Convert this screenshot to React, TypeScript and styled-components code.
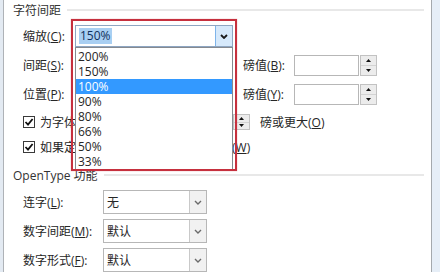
import React from "react";
import styled, { createGlobalStyle } from "styled-components";

const Global = createGlobalStyle`
  html, body { margin: 0; padding: 0; background: #fff; }
  body {
    font-family: "Open Sans", "Noto Sans CJK SC", sans-serif;
    font-size: 12px;
    color: #262626;
  }
  * { box-sizing: border-box; }
  u { text-decoration-thickness: 1px; text-underline-offset: 1px; }
`;

const Window = styled.div`
  display: flex;
  width: 440px;
  height: 272px;
  overflow: hidden;
  background: #fff;
`;

const EdgeLeft = styled.div`
  width: 4px;
  flex: none;
  background: #e3eaf2;
  border-right: 1px solid #aeb2b7;
`;

const EdgeRight = styled.div`
  width: 9px;
  flex: none;
  background: #e6eef7;
  border-left: 1px solid #a5a9ad;
`;

const Panel = styled.div`
  flex: 1;
  display: flex;
  flex-direction: column;
  padding: 3px 7px 0 9px;
`;

const GroupHeader = styled.div<{ $mt?: number }>`
  display: flex;
  align-items: center;
  gap: 6px;
  height: 14px;
  margin-top: ${(p) => p.$mt ?? 0}px;
  white-space: nowrap;
  color: #333;
  &::after {
    content: "";
    flex: 1;
    height: 2px;
    background: #e8e8e8;
  }
`;

const FieldRow = styled.div<{ $mt: number; $h: number }>`
  display: flex;
  align-items: center;
  height: ${(p) => p.$h}px;
  margin-top: ${(p) => p.$mt}px;
  padding-left: 10px;
`;

const Label = styled.span<{ $w: number; $ml?: number }>`
  width: ${(p) => p.$w}px;
  margin-left: ${(p) => p.$ml ?? 0}px;
  flex: none;
  white-space: nowrap;
`;

const ComboWrap = styled.div<{ $w: number; $h: number }>`
  position: relative;
  flex: none;
  width: ${(p) => p.$w}px;
  height: ${(p) => p.$h}px;
`;

const ComboBox = styled.div<{ $w: number; $h: number; $active?: boolean }>`
  flex: none;
  display: flex;
  width: ${(p) => p.$w}px;
  height: ${(p) => p.$h}px;
  border: 1px solid ${(p) => (p.$active ? "#8ea6c2" : "#b7b7b7")};
  background: #fff;
`;

const ComboText = styled.span`
  flex: 1;
  display: flex;
  align-items: center;
  padding-left: 3px;
  overflow: hidden;
  white-space: nowrap;
`;

const Selected = styled.span`
  background: #a9cff2;
  color: #10305c;
  padding: 1px 1px 2px;
  line-height: 1.1;
`;

const ComboButton = styled.span<{ $active?: boolean }>`
  width: 17px;
  flex: none;
  display: flex;
  align-items: center;
  justify-content: center;
  border-left: 1px solid ${(p) => (p.$active ? "#7eb4ea" : "#c9c9c9")};
  background: ${(p) => (p.$active ? "#d6e9fb" : "#f1f1f1")};
`;

const DropList = styled.div`
  position: absolute;
  z-index: 2;
  top: 22px;
  left: 0;
  width: 158px;
  padding-top: 1px;
  border: 1px solid #85898f;
  background: #fff;
`;

const DropItem = styled.div<{ $hi?: boolean }>`
  height: 15px;
  line-height: 15px;
  padding-left: 2px;
  background: ${(p) => (p.$hi ? "#3399ff" : "transparent")};
  color: ${(p) => (p.$hi ? "#fff" : "#262626")};
`;

const Highlight = styled.div`
  position: absolute;
  z-index: 3;
  top: -6px;
  left: -4px;
  width: 166px;
  height: 152px;
  border: 2px solid #c6303e;
  box-shadow: 0 0 1px rgba(198, 48, 62, 0.5);
  pointer-events: none;
`;

const Spinner = styled.div<{ $w: number; $h: number }>`
  flex: none;
  display: flex;
  gap: 1px;
  width: ${(p) => p.$w}px;
  height: ${(p) => p.$h}px;
`;

const SpinInput = styled.div`
  flex: 1;
  border: 1px solid #b7b7b7;
  background: #fff;
`;

const SpinButtons = styled.div`
  width: 17px;
  flex: none;
  display: flex;
  flex-direction: column;
  border: 1px solid #c2c2c2;
  background: #ececec;
`;

const SpinHalf = styled.span`
  flex: 1;
  display: flex;
  align-items: center;
  justify-content: center;
  & + & {
    border-top: 1px solid #d3d3d3;
  }
`;

const CheckRow = styled.div<{ $mt: number }>`
  display: flex;
  align-items: center;
  height: 20px;
  margin-top: ${(p) => p.$mt}px;
  padding-left: 10px;
  white-space: nowrap;
`;

const CheckLabel = styled.label<{ $w?: number }>`
  display: flex;
  align-items: center;
  flex: none;
  width: ${(p) => (p.$w ? `${p.$w}px` : "auto")};
`;

const Box = styled.span`
  width: 12px;
  height: 12px;
  flex: none;
  display: inline-flex;
  align-items: center;
  justify-content: center;
  margin-right: 5px;
  border: 1px solid #3a3a3a;
  background: #fff;
`;

const AfterText = styled.span`
  margin-left: 10px;
`;

const Chevron = ({ dark }: { dark?: boolean }) => (
  <svg width="8" height="5" viewBox="0 0 8 5">
    <path
      d="M1 1 L4 4 L7 1"
      fill="none"
      stroke={dark ? "#1a1a1a" : "#6a6a6a"}
      strokeWidth={dark ? 1.8 : 1.4}
    />
  </svg>
);

const Tri = ({ up }: { up?: boolean }) => (
  <svg width="5" height="3" viewBox="0 0 5 3">
    <path d={up ? "M0 3 L2.5 0 L5 3 Z" : "M0 0 L2.5 3 L5 0 Z"} fill="#111" />
  </svg>
);

const Check = () => (
  <svg width="10" height="10" viewBox="0 0 10 10">
    <path d="M1.5 5 L4 7.6 L8.6 2" fill="none" stroke="#111" strokeWidth="1.8" />
  </svg>
);

const SpinBox = ({ w, h }: { w: number; h: number }) => (
  <Spinner $w={w} $h={h}>
    <SpinInput />
    <SpinButtons>
      <SpinHalf>
        <Tri up />
      </SpinHalf>
      <SpinHalf>
        <Tri />
      </SpinHalf>
    </SpinButtons>
  </Spinner>
);

const Combo = ({
  w,
  h,
  value,
  active,
}: {
  w: number;
  h: number;
  value?: string;
  active?: boolean;
}) => (
  <ComboBox $w={w} $h={h} $active={active}>
    <ComboText>{active && value ? <Selected>{value}</Selected> : value}</ComboText>
    <ComboButton $active={active}>
      <Chevron dark={active} />
    </ComboButton>
  </ComboBox>
);

const scales = ["200%", "150%", "100%", "90%", "80%", "66%", "50%", "33%"];

export default function App() {
  return (
    <>
      <Global />
      <Window>
        <EdgeLeft />
        <Panel>
          <GroupHeader>字符间距</GroupHeader>

          <FieldRow $mt={8} $h={22}>
            <Label $w={52}>
              缩放(<u>C</u>):
            </Label>
            <ComboWrap $w={158} $h={22}>
              <Combo w={158} h={22} value="150%" active />
              <DropList>
                {scales.map((s) => (
                  <DropItem key={s} $hi={s === "100%"}>
                    {s}
                  </DropItem>
                ))}
              </DropList>
              <Highlight />
            </ComboWrap>
          </FieldRow>

          <FieldRow $mt={7} $h={22}>
            <Label $w={52}>
              间距(<u>S</u>):
            </Label>
            <Combo w={158} h={21} />
            <Label $w={51} $ml={10}>
              磅值(<u>B</u>):
            </Label>
            <SpinBox w={83} h={21} />
          </FieldRow>

          <FieldRow $mt={7} $h={22}>
            <Label $w={52}>
              位置(<u>P</u>):
            </Label>
            <Combo w={158} h={21} />
            <Label $w={51} $ml={10}>
              磅值(<u>Y</u>):
            </Label>
            <SpinBox w={83} h={21} />
          </FieldRow>

          <CheckRow $mt={7}>
            <CheckLabel $w={167}>
              <Box>
                <Check />
              </Box>
              为字体调整字间距(<u>K</u>):
            </CheckLabel>
            <SpinBox w={60} h={16} />
            <AfterText>
              磅或更大(<u>O</u>)
            </AfterText>
          </CheckRow>

          <CheckRow $mt={5}>
            <CheckLabel>
              <Box>
                <Check />
              </Box>
              如果定义了文档网格，则对齐到网格(<u>W</u>)
            </CheckLabel>
          </CheckRow>

          <GroupHeader $mt={11}>OpenType 功能</GroupHeader>

          <FieldRow $mt={8} $h={24}>
            <Label $w={80}>
              连字(<u>L</u>):
            </Label>
            <Combo w={104} h={24} value="无" />
          </FieldRow>

          <FieldRow $mt={5} $h={24}>
            <Label $w={80}>
              数字间距(<u>M</u>):
            </Label>
            <Combo w={104} h={24} value="默认" />
          </FieldRow>

          <FieldRow $mt={5} $h={24}>
            <Label $w={80}>
              数字形式(<u>F</u>):
            </Label>
            <Combo w={104} h={24} value="默认" />
          </FieldRow>
        </Panel>
        <EdgeRight />
      </Window>
    </>
  );
}
